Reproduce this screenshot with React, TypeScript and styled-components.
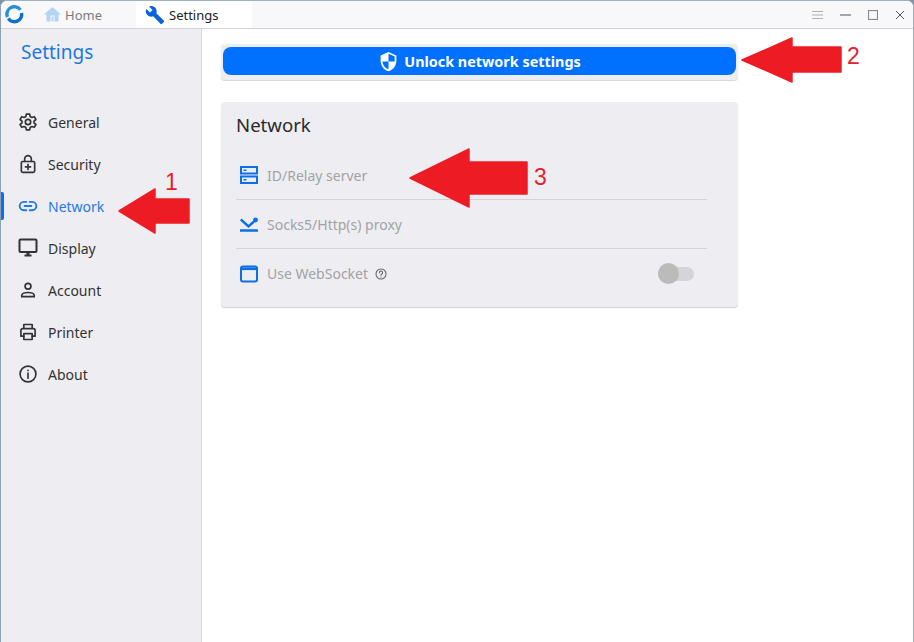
import React from "react";
import styled, { createGlobalStyle } from "styled-components";

const Global = createGlobalStyle`
  html, body { margin: 0; padding: 0; background: #7f93a8; }
  body { font-family: "Noto Sans", "Open Sans", sans-serif; }
  #root { width: 914px; height: 642px; }
`;

const Win = styled.div`
  position: relative; width: 914px; height: 642px; box-sizing: border-box;
  background: #ffffff; border-radius: 7px 7px 0 0; border-left: 1px solid #8da0b5; border-top: 1px solid #9fb0c2;
  border-right: 1px solid #9fb0c2;
  display: flex; flex-direction: column; overflow: hidden;
`;
const TitleBar = styled.header`
  height: 27px; flex: none; background: #f8f8fa; border-bottom: 1px solid #d3d3d8;
  display: flex; align-items: stretch;
`;
const Logo = styled.div`
  width: 43px; flex: none; display: flex; align-items: center; padding-left: 4px; box-sizing: border-box;
`;
const Tab = styled.div<{ $active?: boolean }>`
  display: flex; align-items: center; gap: 4px; box-sizing: border-box;
  width: ${p => (p.$active ? "116px" : "92px")};
  padding-left: ${p => (p.$active ? "9px" : "0")};
  background: ${p => (p.$active ? "#ffffff" : "transparent")};
  color: ${p => (p.$active ? "#222222" : "#7b7b7f")};
  font-size: 13px;
`;
const Spacer = styled.div`flex: 1;`;
const WinButtons = styled.div`
  display: flex; align-items: center; gap: 17px; padding-right: 8px; color: #6d6d70;
`;
const Body = styled.div`flex: 1; display: flex; min-height: 0;`;
const Sidebar = styled.aside`
  width: 200px; flex: none; background: #eeeef2; border-right: 1px solid #d6d6da; padding-top: 9px;
  display: flex; flex-direction: column;
`;
const SideTitle = styled.h1`
  margin: 0 0 0 20px; height: 63px; font-size: 19px; font-weight: 400; color: #1e77de; line-height: 28px;
`;
const NavList = styled.nav`display: flex; flex-direction: column;`;
const NavItem = styled.div<{ $active?: boolean }>`
  height: 42px; display: flex; align-items: center; gap: 10px; padding-left: 17px;
  font-size: 14px; box-sizing: border-box; position: relative;
  color: ${p => (p.$active ? "#1f7ae8" : "#333333")};
  &::before {
    content: ""; position: absolute; left: 0; top: 7px; bottom: 7px; width: 3px;
    background: ${p => (p.$active ? "#0a6fe8" : "transparent")};
    border-radius: 0 2px 2px 0;
  }
`;
const Main = styled.main`
  flex: 1; padding: 15px 0 0 19px; display: flex; flex-direction: column; gap: 22px;
`;
const ButtonCard = styled.div`
  width: 517px; height: 36px; box-sizing: border-box; padding: 3px 2px 0 2px;
  background: #eeeef2; border-radius: 4px; box-shadow: 0 1px 1px #d8d8dc;
`;
const UnlockButton = styled.button`
  width: 100%; height: 28px; border: 0; border-radius: 8px; background: #0071ff; color: #fff;
  font: 700 14.4px "Noto Sans", sans-serif; display: flex; align-items: center; justify-content: center; gap: 5px; padding: 1px 0 0;
`;
const Card = styled.section`
  width: 517px; height: 205px; box-sizing: border-box; background: #eeeef2; border-radius: 4px;
  box-shadow: 0 1px 1px #cfcfd3; padding: 10px 31px 0 15px;
`;
const CardTitle = styled.h2`
  margin: 0 0 14px; font-size: 18.6px; font-weight: 400; color: #2a2a2a; line-height: 25px;
`;
const Row = styled.div<{ $last?: boolean }>`
  height: 49px; box-sizing: border-box; display: flex; align-items: center; gap: 9px; padding-left: 4px;
  padding-right: 13px;
  color: #a2a2a6; font-size: 14px;
  border-bottom: ${p => (p.$last ? "none" : "1px solid #d4d4d8")};
`;
const Toggle = styled.div`
  position: relative; width: 36px; height: 14px; background: #d5d5d9; border-radius: 7px; margin-left: auto;
  &::before {
    content: ""; position: absolute; left: 0; top: -3.5px; width: 21px; height: 21px; border-radius: 50%; background: #bbbbbb;
  }
`;
const Overlay = styled.svg`position: absolute; left: -1px; top: -1px; pointer-events: none;`;
const Mark = styled.span<{ $x: number; $y: number }>`
  position: absolute; left: ${p => p.$x}px; top: ${p => p.$y}px; color: #e4202c; font: 400 23px/26px "Liberation Sans", sans-serif;
`;

const ic = { fill: "none", stroke: "currentColor", strokeWidth: 2, strokeLinecap: "round" as const, strokeLinejoin: "round" as const };

const Gear = () => (
  <svg width="20" height="20" viewBox="0 0 24 24" {...ic}>
    <circle cx="12" cy="12" r="3.2" />
    <path d="M10 2.5h4l.6 3 2 1.1 2.9-1 2 3.4-2.3 2 0 2 2.3 2-2 3.4-2.9-1-2 1.1-.6 3h-4l-.6-3-2-1.1-2.9 1-2-3.4 2.3-2 0-2-2.3-2 2-3.4 2.9 1 2-1.1z" />
  </svg>
);
const Lock = () => (
  <svg width="20" height="20" viewBox="0 0 24 24" {...ic}>
    <rect x="4" y="9" width="16" height="13" rx="1.5" />
    <path d="M8 9V6a4 4 0 0 1 8 0v3M12 12.5v6M9 15.5h6" />
  </svg>
);
const LinkIc = () => (
  <svg width="20" height="20" viewBox="0 0 24 24" {...ic} strokeWidth={2.3}>
    <path d="M10 7H7a5 5 0 0 0 0 10h3M14 7h3a5 5 0 0 1 0 10h-3M8 12h8" />
  </svg>
);
const Monitor = () => (
  <svg width="20" height="20" viewBox="0 0 20 20" fill="none" stroke="currentColor">
    <rect x="1.5" y="1.5" width="17" height="12.5" rx="1" strokeWidth="2" />
    <path d="M6.5 17.5h7" strokeWidth="2" /><path d="M10 14v3" strokeWidth="3" />
  </svg>
);
const User = () => (
  <svg width="20" height="20" viewBox="0 0 24 24" {...ic}>
    <circle cx="12" cy="7.5" r="3.5" />
    <path d="M4.5 20v-1.5c0-2 3.5-3.5 7.5-3.5s7.5 1.5 7.5 3.5V20z" />
  </svg>
);
const Printer = () => (
  <svg width="20" height="20" viewBox="0 0 24 24" {...ic}>
    <path d="M7 8V3h10v5M7 17H3.5v-7a2 2 0 0 1 2-2h13a2 2 0 0 1 2 2v7H17" />
    <rect x="7" y="14" width="10" height="7" />
  </svg>
);
const Info = () => (
  <svg width="20" height="20" viewBox="0 0 24 24" {...ic}>
    <circle cx="12" cy="12" r="9.5" />
    <path d="M12 11v6M12 7.5v.2" />
  </svg>
);
const Server = () => (
  <svg width="18" height="18" viewBox="0 0 18 18" fill="none" stroke="#0a6fe8" strokeWidth="2">
    <rect x="1" y="1" width="16" height="6.5" />
    <rect x="1" y="10.5" width="16" height="6.5" />
    <path d="M3.5 4.2h3M3.5 13.8h3" strokeWidth="1.5" />
  </svg>
);
const Proxy = () => (
  <svg width="18" height="18" viewBox="0 0 18 18" fill="none" stroke="#0a6fe8" strokeWidth="2.4">
    <path d="M0 15.5h18" />
    <path d="M.8 4.5l7.7 7 5.5-5" />
    <circle cx="15.5" cy="5" r="2.4" fill="#0a6fe8" stroke="none" />
  </svg>
);
const WebWin = () => (
  <svg width="18" height="18" viewBox="0 0 18 18" fill="none" stroke="#0a6fe8">
    <rect x="1" y="1.5" width="16" height="15" rx="2" strokeWidth="2" />
    <path d="M1 3.8h16" strokeWidth="2.6" />
  </svg>
);
const Help = () => (
  <svg width="12" height="12" viewBox="0 0 12 12" fill="none" stroke="#666" strokeWidth="1.1" strokeLinecap="round" style={{ marginLeft: -2 }}>
    <circle cx="6" cy="6" r="5" />
    <path d="M4.4 4.7a1.6 1.6 0 1 1 2.5 1.3c-.6.4-.9.6-.9 1.2M6 8.900v.1" />
  </svg>
);
const Shield = () => (
  <svg width="21" height="21" viewBox="0 0 24 24">
    <g transform="matrix(-1 0 0 1 24 0)">
      <path fill="#fff" d="M12 1L3 5v6c0 5.55 3.84 10.74 9 12 5.16-1.26 9-6.45 9-12V5l-9-4zm0 10.99h7c-.53 4.12-3.28 7.79-7 8.94V12H5V6.3l7-3.11v8.8z" />
    </g>
  </svg>
);

const nav = [
  { label: "General", icon: <Gear /> },
  { label: "Security", icon: <Lock /> },
  { label: "Network", icon: <LinkIc />, active: true },
  { label: "Display", icon: <Monitor /> },
  { label: "Account", icon: <User /> },
  { label: "Printer", icon: <Printer /> },
  { label: "About", icon: <Info /> },
];

export default function App() {
  return (
    <>
      <Global />
      <Win>
        <TitleBar>
          <Logo>
            <svg width="19" height="19" viewBox="0 0 19 19" fill="none" strokeWidth="3.4">
              <path d="M15.4 4.9A7.4 7.4 0 0 0 2.5 12" stroke="#2a8fd6" />
              <path d="M3.3 13.6A7.4 7.4 0 0 0 16.6 8" stroke="#0a6fd0" />
            </svg>
          </Logo>
          <Tab>
            <svg width="17" height="17" viewBox="0 0 17 17" style={{ flex: "none" }}>
              <path fill="#b3d4f2" fillRule="evenodd" d="M8.5 1L0 8.5h2.5v7h12v-7H17zM6.5 9.5h4v6h-1V10.5h-2v5h-1z" />
            </svg>
            Home
          </Tab>
          <Tab $active>
            <svg width="20" height="20" viewBox="0 0 24 24" style={{ flex: "none" }}>
              <path fill="#0a63d8" d="M22.7 19l-9.1-9.1c.9-2.3.4-5-1.5-6.9-2-2-5-2.4-7.4-1.3L9 6 6 9 1.6 4.7C.4 7.1.9 10.1 2.9 12.1c1.9 1.9 4.6 2.4 6.9 1.5l9.1 9.1c.4.4 1 .4 1.4 0l2.3-2.3c.5-.4.5-1.1.1-1.4z" />
            </svg>
            Settings
          </Tab>
          <Spacer />
          <WinButtons>
            <svg width="11" height="10" viewBox="0 0 11 10" stroke="#b0b0b3"><path d="M0 1.5h11M0 5h11M0 8.5h11" /></svg>
            <svg width="11" height="10" viewBox="0 0 11 10" stroke="#555"><path d="M0 5h11" strokeWidth="1.2" /></svg>
            <svg width="10" height="10" viewBox="0 0 10 10" fill="none" stroke="#8a8a8d"><rect x=".5" y=".5" width="9" height="9" strokeWidth="1.2" /></svg>
            <svg width="10" height="10" viewBox="0 0 10 10" stroke="#555"><path d="M1 1l8 8M9 1l-8 8" /></svg>
          </WinButtons>
        </TitleBar>
        <Body>
          <Sidebar>
            <SideTitle>Settings</SideTitle>
            <NavList>
              {nav.map(n => (
                <NavItem key={n.label} $active={n.active}>{n.icon}{n.label}</NavItem>
              ))}
            </NavList>
          </Sidebar>
          <Main>
            <ButtonCard>
              <UnlockButton><Shield />Unlock network settings</UnlockButton>
            </ButtonCard>
            <Card>
              <CardTitle>Network</CardTitle>
              <Row><Server />ID/Relay server</Row>
              <Row><Proxy />Socks5/Http(s) proxy</Row>
              <Row $last><WebWin />Use WebSocket<Help /><Toggle /></Row>
            </Card>
          </Main>
        </Body>
        <Overlay width="914" height="642" viewBox="0 0 914 642">
          <g fill="#ed1c24" stroke="#ed1c24" strokeWidth="1.5" strokeLinejoin="round">
            <path d="M119 211L155 189V199H189V223H155V233Z" />
            <path d="M742 60L792 38V47H841V72H792V82Z" />
            <path d="M410 178L469 149V162H527V194H469V207Z" />
          </g>
        </Overlay>
        <Mark $x={164} $y={168}>1</Mark>
        <Mark $x={846} $y={42}>2</Mark>
        <Mark $x={533} $y={163}>3</Mark>
      </Win>
    </>
  );
}
